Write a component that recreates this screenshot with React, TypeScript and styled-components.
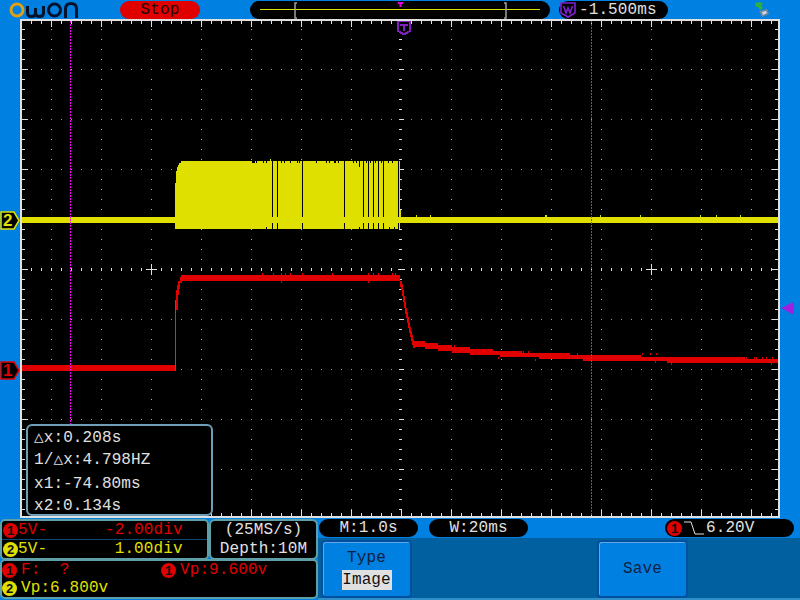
import React from 'react';
import styled, { createGlobalStyle } from 'styled-components';

const YELLOW = '#e0e000';
const RED = '#e00000';
const WHITE = '#e0e0e0';
const BLUE = '#0080e0';
const TEAL = '#5f9fa8';

const GlobalStyle = createGlobalStyle`
  html, body { margin: 0; padding: 0; background: ${BLUE}; }
  body { font-family: "Liberation Mono", "DejaVu Sans Mono", monospace; font-size: 16px; letter-spacing: 0.1px; }
`;

const Screen = styled.div`
  position: relative;
  width: 800px;
  height: 600px;
  overflow: hidden;
  display: flex;
  flex-direction: column;
  background: ${BLUE};
`;

const TopBar = styled.div`
  height: 19px;
  display: flex;
  align-items: flex-start;
`;

const Logo = styled.svg`
  margin: 1px 0 0 8px;
  flex: none;
`;

const StopPill = styled.div`
  margin: 1px 0 0 40px;
  width: 80px;
  height: 18px;
  border-radius: 9px;
  background: ${RED};
  color: #200808;
  text-align: center;
  line-height: 18px;
`;

const Strip = styled.svg`
  margin: 1px 0 0 50px;
  flex: none;
`;

const DelayPill = styled.div`
  margin: 1px 0 0 9px;
  width: 109px;
  height: 18px;
  border-radius: 9px;
  background: #000;
  color: ${WHITE};
  display: flex;
  align-items: center;
  gap: 3px;
  padding-left: 1px;
  box-sizing: border-box;
  line-height: 18px;
`;

const UsbIcon = styled.svg`
  margin: 1px 0 0 87px;
  flex: none;
`;

const Middle = styled.div`
  height: 499px;
  padding: 0 20px;
  position: relative;
`;

const Plot = styled.div`
  position: relative;
  width: 760px;
  height: 499px;
  box-sizing: border-box;
  border: 2px solid ${WHITE};
  background: #000;
`;

const PlotSvg = styled.svg`
  display: block;
  shape-rendering: crispEdges;
`;

const MeasurePanel = styled.div`
  position: absolute;
  left: 4px;
  bottom: 0;
  width: 187px;
  height: 92px;
  box-sizing: border-box;
  border: 2px solid #6f9fb8;
  border-radius: 6px;
  background: #000;
  color: ${WHITE};
  padding: 1px 0 0 6px;
`;

const MeasureLine = styled.div<{ $h: number }>`
  height: ${p => p.$h}px;
  line-height: 22px;
  white-space: pre;
`;

const Marker = styled.svg<{ $top: number; $left?: number }>`
  position: absolute;
  top: ${p => p.$top}px;
  left: ${p => p.$left ?? 0}px;
`;

const Bottom = styled.div`
  flex: 1;
  display: grid;
  grid-template-columns: 318px 1fr;
  min-height: 0;
`;

const LeftColumn = styled.div`
  display: flex;
  flex-direction: column;
  padding-top: 1px;
`;

const TopPanels = styled.div`
  display: flex;
  height: 41px;
`;

const ChannelColumn = styled.div`
  width: 209px;
  box-sizing: border-box;
  display: flex;
  flex-direction: column;
  background: #000;
  border: 2px solid ${TEAL};
  border-radius: 5px;
`;

const ChannelRow = styled.div<{ $split?: boolean }>`
  flex: 1;
  display: flex;
  align-items: center;
  padding-left: 1px;
  ${p => (p.$split ? 'border-bottom: 1px solid #104a70;' : '')}
`;

const Badge = styled.span<{ $color: string }>`
  flex: none;
  width: 15px;
  height: 15px;
  border-radius: 50%;
  background: ${p => p.$color};
  color: #101010;
  font: bold 13px/1 "Liberation Sans", sans-serif;
  letter-spacing: 0;
  display: inline-flex;
  align-items: center;
  justify-content: center;
`;

const Readout = styled.span<{ $color: string; $w?: number }>`
  color: ${p => p.$color};
  white-space: pre;
  ${p => (p.$w ? `width: ${p.$w}px;` : '')}
`;

const SamplePanel = styled.div`
  width: 109px;
  background: #000;
  border: 2px solid ${TEAL};
  border-radius: 6px;
  box-sizing: border-box;
  color: ${WHITE};
  text-align: center;
  line-height: 19px;
`;

const ReadingsPanel = styled.div`
  height: 40px;
  box-sizing: border-box;
  margin-top: -1px;
  background: #000;
  border: 2px solid ${TEAL};
  border-radius: 5px;
  display: grid;
  grid-template-columns: 159px 1fr;
  grid-template-rows: 1fr 1fr;
  align-items: center;
`;

const Reading = styled.div`
  display: flex;
  align-items: center;
  gap: 4px;
`;

const RightColumn = styled.div`
  display: flex;
  flex-direction: column;
`;

const StatusRow = styled.div`
  height: 20px;
  display: flex;
  align-items: flex-start;
  padding-left: 1px;
`;

const StatusPill = styled.div<{ $w: number; $ml?: number }>`
  width: ${p => p.$w}px;
  margin: 1px 0 0 ${p => p.$ml ?? 0}px;
  height: 18px;
  border-radius: 9px;
  background: #000;
  color: ${WHITE};
  line-height: 18px;
  text-align: center;
  flex: none;
`;

const TriggerPill = styled(StatusPill)`
  display: flex;
  align-items: center;
  padding-left: 2px;
  box-sizing: border-box;
  gap: 1px;
`;

const SoftPanel = styled.div`
  flex: 1;
  background: #0060a0;
  border-bottom: 2px solid #2f8fc8;
  display: flex;
  align-items: flex-start;
  padding: 2px 0 0 3px;
`;

const SoftButton = styled.div<{ $ml?: number }>`
  width: 91px;
  height: 58px;
  box-sizing: border-box;
  margin-left: ${p => p.$ml ?? 0}px;
  background: ${BLUE};
  border: 2px solid #0050a0;
  box-shadow: inset 1px 1px 0 #5fa8e8;
  border-radius: 4px;
  color: #102040;
  display: flex;
  flex-direction: column;
  align-items: center;
  justify-content: center;
  line-height: 20px;
`;

const ButtonValue = styled.span`
  margin-top: 2px;
  width: 50px;
  height: 20px;
  background: ${WHITE};
  color: #101010;
  text-align: center;
`;

const range = (from: number, to: number, step: number) => {
  const out: number[] = [];
  for (let v = from; v <= to; v += step) out.push(v);
  return out;
};

const Rect = (x: number, y: number, w: number, h: number, fill: string, key: string) => (
  <rect key={key} x={x} y={y} width={w} height={h} fill={fill} />
);

const Grid = () => {
  const items: React.ReactNode[] = [];
  const majorX = range(51, 751, 50);
  const majorY = range(69, 469, 50);
  // dots along the major lines
  majorX.forEach(x =>
    range(29, 509, 10).forEach(y => {
      if (x !== 401) items.push(Rect(x, y, 1, 1, '#b0b0b0', `dv${x}-${y}`));
    })
  );
  majorY.forEach(y =>
    range(31, 771, 10).forEach(x => {
      if (y !== 269) items.push(Rect(x, y, 1, 1, '#a0a0a0', `dh${y}-${x}`));
    })
  );
  // frame ticks
  range(31, 771, 10).forEach(x => {
    const big = (x - 1) % 50 === 0;
    items.push(Rect(x, 21, 1, big ? 6 : 3, WHITE, `tt${x}`));
    items.push(Rect(x, big ? 510 : 513, 1, big ? 6 : 3, WHITE, `tb${x}`));
    if (x !== 401) items.push(Rect(x, 268, 1, 3, WHITE, `tc${x}`));
  });
  range(29, 509, 10).forEach(y => {
    const big = (y - 19) % 50 === 0;
    items.push(Rect(22, y, big ? 6 : 3, 1, WHITE, `tl${y}`));
    items.push(Rect(big ? 772 : 775, y, big ? 6 : 3, 1, WHITE, `tr${y}`));
    items.push(Rect(399, y, big ? 5 : 3, 1, WHITE, `tm${y}`));
  });
  // cross hairs on the centre line
  [151, 651].forEach(x => {
    items.push(Rect(x - 5, 269, 11, 1, WHITE, `cxh${x}`));
    items.push(Rect(x, 264, 1, 11, WHITE, `cxv${x}`));
  });
  items.push(Rect(398, 269, 7, 1, WHITE, 'c0h'));
  return <g>{items}</g>;
};

const burstGaps = [272, 277, 302, 344, 363, 368, 373, 378, 383, 398];
const topNotches: [number, number, number][] = [
  [252, 3, 2], [256, 1, 2], [263, 1, 2], [266, 1, 2], [281, 1, 2], [284, 1, 2], [290, 1, 2], [297, 1, 2],
  [299, 1, 2], [316, 1, 2], [326, 1, 2], [329, 1, 2], [334, 2, 2], [338, 1, 2], [353, 1, 2], [356, 1, 2],
  [359, 1, 6], [366, 1, 2], [370, 1, 2], [375, 1, 2], [381, 1, 2], [388, 1, 2], [392, 1, 2],
];
const bottomNotches = [266, 359, 389, 394];

const YellowTrace = () => (
  <g>
    <rect x={22} y={217} width={756} height={6} fill={YELLOW} />
    <rect x={175} y={183} width={1} height={46} fill={YELLOW} />
    <rect x={176} y={171} width={1} height={58} fill={YELLOW} />
    <rect x={177} y={167} width={1} height={62} fill={YELLOW} />
    <rect x={178} y={165} width={1} height={64} fill={YELLOW} />
    <rect x={179} y={163} width={2} height={66} fill={YELLOW} />
    <rect x={181} y={161} width={219} height={68} fill={YELLOW} />
    <rect x={270} y={159} width={1} height={2} fill={YELLOW} />
    <rect x={400} y={210} width={1} height={13} fill={YELLOW} />
    {burstGaps.map(x => (
      <g key={x}>
        <rect x={x} y={161} width={1} height={56} fill="#000" />
        <rect x={x} y={223} width={1} height={6} fill="#000" />
      </g>
    ))}
    {topNotches.map(([x, w, h]) => (
      <rect key={x} x={x} y={161} width={w} height={h} fill="#000" />
    ))}
    {bottomNotches.map(x => (
      <rect key={x} x={x} y={227} width={1} height={2} fill="#000" />
    ))}
    {[416, 430, 545, 546, 600, 640, 700, 716, 740].map(x => (
      <rect key={x} x={x} y={215} width={1} height={2} fill={YELLOW} />
    ))}
  </g>
);

// x from, x to, top and bottom of the band, the slow decay after the pulse
const decay: [number, number, number, number][] = [
  [414, 425, 341, 347], [425, 438, 343, 349], [438, 452, 345, 351], [452, 470, 347, 353],
  [470, 493, 349, 355], [493, 500, 351, 355], [500, 522, 351, 357], [522, 539, 353, 357],
  [539, 570, 353, 359], [570, 583, 355, 359], [583, 641, 355, 361], [641, 667, 357, 361],
  [667, 745, 357, 363], [745, 778, 359, 363],
];

const fall: [number, number][] = [
  [400, 281], [401, 284], [402, 290], [403, 296], [404, 302], [405, 308], [406, 312], [407, 317],
  [408, 322], [409, 327], [410, 331], [411, 335], [412, 339], [413, 342],
];

const RedTrace = () => (
  <g>
    <rect x={22} y={365} width={153} height={6} fill={RED} />
    <rect x={175} y={300} width={1} height={71} fill="#a04040" />
    <rect x={176} y={290} width={2} height={20} fill={RED} />
    <rect x={177} y={285} width={2} height={10} fill={RED} />
    <rect x={178} y={281} width={2} height={8} fill={RED} />
    <rect x={180} y={277} width={2} height={6} fill={RED} />
    <rect x={181} y={275} width={219} height={6} fill={RED} />
    {[262, 273, 281, 285, 290, 302, 332, 368, 373, 378, 392, 395].map(x => (
      <rect key={x} x={x} y={273} width={1} height={2} fill={RED} />
    ))}
    {[281, 368].map(x => (
      <rect key={x} x={x} y={281} width={1} height={2} fill={RED} />
    ))}
    {fall.map(([x, y]) => (
      <rect key={x} x={x} y={y} width={2} height={6} fill={RED} />
    ))}
    {decay.map(([x0, x1, y0, y1]) => (
      <rect key={x0} x={x0} y={y0} width={x1 - x0} height={y1 - y0} fill={RED} />
    ))}
    {[
      [454, 345], [523, 351], [528, 351], [577, 353], [642, 353], [650, 353], [656, 353], [746, 357],
      [754, 357], [756, 357], [762, 357], [766, 357], [772, 357],
    ].map(([x, y]) => (
      <rect key={x} x={x} y={y} width={1} height={2} fill={RED} />
    ))}
    {[[498, 357], [535, 359], [655, 361], [671, 363], [771, 363]].map(([x, y]) => (
      <rect key={x} x={x} y={y} width={1} height={2} fill={RED} />
    ))}
  </g>
);

const Waveforms = () => (
  <PlotSvg width={756} height={495} viewBox="22 21 756 495">
    <Grid />
    <YellowTrace />
    <RedTrace />
    <line x1={70.5} y1={21} x2={70.5} y2={516} stroke="#f000f0" strokeWidth={1} strokeDasharray="2 1" />
    <line x1={591.5} y1={21} x2={591.5} y2={516} stroke="#c020c0" strokeWidth={1} strokeDasharray="2 1" />
    <path d="M398 21h12v10l-6 3.500l-6-3.500z" fill="#000" stroke="#8020c0" strokeWidth={2} />
    <path d="M400 25h8M404 25v6" fill="none" stroke="#8020c0" strokeWidth={2} />
  </PlotSvg>
);

export default function App() {
  return (
    <Screen>
      <GlobalStyle />
      <TopBar>
        <Logo width={72} height={17} viewBox="0 0 72 17">
          <circle cx={9} cy={9} r={6} fill="none" stroke="#e0a010" strokeWidth={3} />
          <path d="M19.500 5v7q0 3.500 4 3.500q4 0 4-3.500V7v5q0 3.500 4 3.500q4 0 4-3.500V5" fill="none" stroke="#04122c" strokeWidth={3} />
          <circle cx={46.5} cy={9} r={6} fill="none" stroke="#04122c" strokeWidth={3} />
          <path d="M57.500 17V8q0-5.500 5.500-5.500T68.500 8v9" fill="none" stroke="#04122c" strokeWidth={3} />
        </Logo>
        <StopPill>Stop</StopPill>
        <Strip width={300} height={18} viewBox="0 0 300 18">
          <path d="M9 0h282a9 9 0 0 1 0 18H9a9 9 0 0 1 0-18z" fill="#000" />
          <rect x={10} y={8} width={280} height={1} fill={YELLOW} />
          <path d="M47 2h-2v15h2M254 2h2v15h-2" fill="none" stroke="#a0a0a0" strokeWidth={1.5} />
          <path d="M148 2h5M150.500 2v4" fill="none" stroke="#e000e0" strokeWidth={2} />
        </Strip>
        <DelayPill>
          <svg width={16} height={16} viewBox="0 0 16 16">
            <path d="M1 1h14v10l-7 4l-7-4z" fill="#000" stroke="#8020d0" strokeWidth={1.6} />
            <path d="M3.500 4l2.500 7l2-5l2 5l2.500-7" fill="none" stroke="#8020d0" strokeWidth={1.6} />
          </svg>
          <span>-1.500ms</span>
        </DelayPill>
        <UsbIcon width={16} height={17} viewBox="0 0 16 17">
          <path d="M0 2l5-1l3 2l-2 2l2 2l-3 2l-2-3l-2 0z" fill="#30b040" />
          <path d="M4 10l8-2l2 5l-7 3z" fill="#7088a0" />
          <path d="M7 11l4-1l1 2l-4 2z" fill="#d0d8e0" />
        </UsbIcon>
      </TopBar>
      <Middle>
        <Plot>
          <Waveforms />
          <MeasurePanel>
            <MeasureLine $h={22}>△x:0.208s</MeasureLine>
            <MeasureLine $h={24}>1/△x:4.798HZ</MeasureLine>
            <MeasureLine $h={22}>x1:-74.80ms</MeasureLine>
            <MeasureLine $h={22}>x2:0.134s</MeasureLine>
          </MeasurePanel>
        </Plot>
        <Marker $top={192} width={20} height={19} viewBox="0 0 20 19">
          <path d="M1 1h13l5 8.500l-5 8.500H1z" fill="#000" stroke={YELLOW} strokeWidth={1.500} />
          <text x={3} y={15} fontFamily="Liberation Sans" fontWeight="bold" fontSize={17} fill={YELLOW}>2</text>
        </Marker>
        <Marker $top={342} width={20} height={19} viewBox="0 0 20 19">
          <path d="M1 1h13l5 8.500l-5 8.500H1z" fill="#000" stroke={RED} strokeWidth={1.500} />
          <text x={3} y={15} fontFamily="Liberation Sans" fontWeight="bold" fontSize={17} fill={RED}>1</text>
        </Marker>
        <Marker $top={282} $left={781} width={14} height={14} viewBox="0 0 14 14">
          <path d="M0 7L13 1v13z" fill="#a020e0" />
        </Marker>
      </Middle>
      <Bottom>
        <LeftColumn>
          <TopPanels>
            <ChannelColumn>
              <ChannelRow $split>
                <Badge $color={RED}>1</Badge>
                <Readout $color={RED} $w={87}>5V-</Readout>
                <Readout $color={RED}>-2.00div</Readout>
              </ChannelRow>
              <ChannelRow>
                <Badge $color={YELLOW}>2</Badge>
                <Readout $color={YELLOW} $w={87}>5V-</Readout>
                <Readout $color={YELLOW}>{' 1.00div'}</Readout>
              </ChannelRow>
            </ChannelColumn>
            <SamplePanel>
              (25MS/s)
              <br />
              Depth:10M
            </SamplePanel>
          </TopPanels>
          <ReadingsPanel>
            <Reading>
              <Badge $color={RED}>1</Badge>
              <Readout $color={RED}>{'F:  ?'}</Readout>
            </Reading>
            <Reading>
              <Badge $color={RED}>1</Badge>
              <Readout $color={RED}>Vp:9.600v</Readout>
            </Reading>
            <Reading>
              <Badge $color={YELLOW}>2</Badge>
              <Readout $color={YELLOW}>Vp:6.800v</Readout>
            </Reading>
          </ReadingsPanel>
        </LeftColumn>
        <RightColumn>
          <StatusRow>
            <StatusPill $w={99}>M:1.0s</StatusPill>
            <StatusPill $w={99} $ml={11}>W:20ms</StatusPill>
            <TriggerPill $w={129} $ml={137}>
              <Badge $color={RED}>1</Badge>
              <svg width={22} height={16} viewBox="0 0 22 16">
                <path d="M1 2h7l4 12h9" fill="none" stroke={WHITE} strokeWidth={1} />
              </svg>
              <span>6.20V</span>
            </TriggerPill>
          </StatusRow>
          <SoftPanel>
            <SoftButton>
              <span>Type</span>
              <ButtonValue>Image</ButtonValue>
            </SoftButton>
            <SoftButton $ml={185}>Save</SoftButton>
          </SoftPanel>
        </RightColumn>
      </Bottom>
    </Screen>
  );
}
